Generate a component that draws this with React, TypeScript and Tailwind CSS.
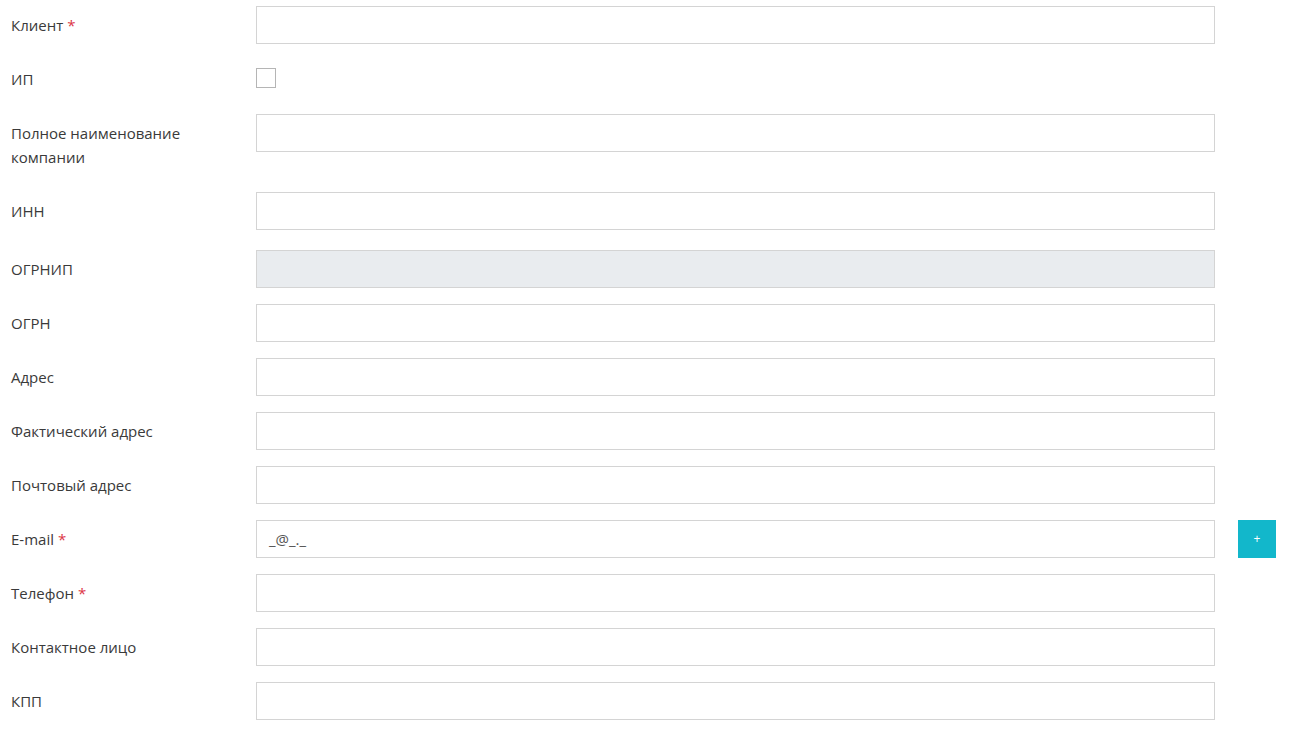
import React from "react";

const Star = () => <span className="text-[#dc3545] ml-[4px]">*</span>;

function Row({
  label,
  required,
  children,
  className = "",
}: {
  label: React.ReactNode;
  required?: boolean;
  children: React.ReactNode;
  className?: string;
}) {
  return (
    <div className={"flex items-start mb-4 " + className}>
      <div className="w-[256px] shrink-0 pl-[11px] pr-4 py-[7px] leading-6 text-[15px] text-[#3a3a3a]">
        {label}
        {required && <Star />}
      </div>
      {children}
    </div>
  );
}

const Input = ({ disabled, value }: { disabled?: boolean; value?: string }) => (
  <div
    className={
      "w-[959px] h-[38px] border border-[#d4d4d4] flex items-center pl-[12px] text-[15px] text-[#555] " +
      (disabled ? "bg-[#e9ecef]" : "bg-white")
    }
  >
    {value}
  </div>
);

export default function App() {
  return (
    <div
      className="min-h-[729px] bg-white pt-[6px]"
      style={{ fontFamily: '"Open Sans", "Noto Sans", sans-serif' }}
    >
      <Row label="Клиент" required>
        <Input />
      </Row>
      <Row label="ИП">
        <div className="mt-2 w-[20px] h-[20px] border border-[#b5b5b5] bg-white" />
      </Row>
      <Row label={<>Полное наименование<br />компании</>}>
        <Input />
      </Row>
      <Row label="ИНН" className="mb-5">
        <Input />
      </Row>
      <Row label="ОГРНИП">
        <Input disabled />
      </Row>
      <Row label="ОГРН">
        <Input />
      </Row>
      <Row label="Адрес">
        <Input />
      </Row>
      <Row label="Фактический адрес">
        <Input />
      </Row>
      <Row label="Почтовый адрес">
        <Input />
      </Row>
      <Row label="E-mail" required>
        <Input value="_@_._" />
        <button className="ml-[23px] w-[38px] h-[38px] bg-[#12b7cb] text-white text-[12px] flex items-center justify-center">
          +
        </button>
      </Row>
      <Row label="Телефон" required>
        <Input />
      </Row>
      <Row label="Контактное лицо">
        <Input />
      </Row>
      <Row label="КПП">
        <Input />
      </Row>
    </div>
  );
}
